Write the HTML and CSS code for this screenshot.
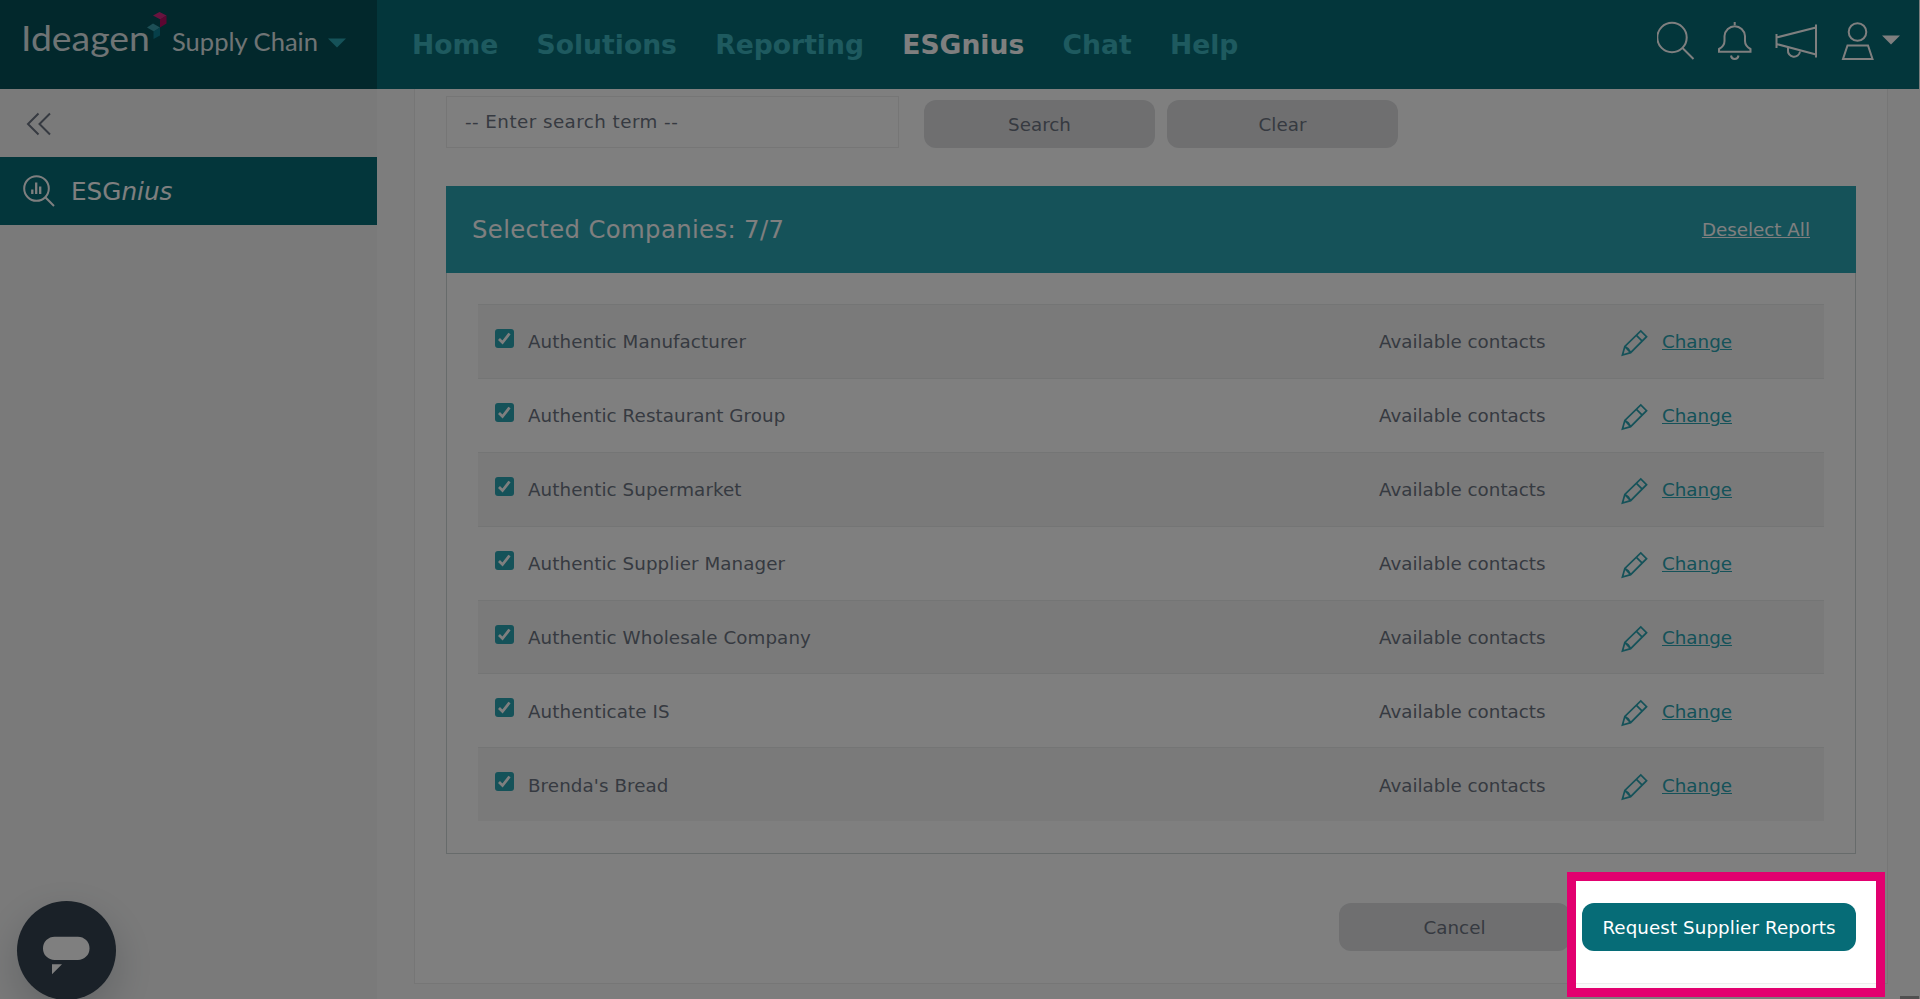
FILE: index.html
```html
<!DOCTYPE html>
<html lang="en">
<head>
  <meta charset="UTF-8" />
  <meta name="viewport" content="width=device-width, initial-scale=1.0" />
  <title>ESGnius - Ideagen Supply Chain</title>
  <link rel="stylesheet" href="styles.css">
</head>
<body>
  <svg class="sprite" width="0" height="0">
    <symbol id="pencil" viewBox="0 0 28 28">
      <path d="M1.5 26.5 L4 17.500 L20.500 1.500 L26.500 7.500 L10 24 Z M16 6 L22 12 M4 17.500 L10 24 M4 17.500 L7.500 20 L10 24" />
    </symbol>
  </svg>

  <header>
    <div class="brand">
      <svg width="377" height="89" viewBox="0 0 377 89">
        <text class="brand-name" x="21" y="51" textLength="129" lengthAdjust="spacingAndGlyphs">Ideagen</text>
        <path fill="#d0277f" d="M153 15.500 L159.500 12 L166.500 15.500 L160.500 19.500 Z" />
        <path fill="#b80d62" d="M166.500 15.500 V23.500 L160 27.500 V19.500 Z" />
        <path fill="#3a9fac" d="M147 27.500 L153 23.500 L160 27.500 L154 31.500 Z" />
        <path fill="#0d7f92" d="M160 27.500 V35.500 L153.500 39 V31.500 Z" />
        <text class="brand-product" x="172" y="51" textLength="146" lengthAdjust="spacingAndGlyphs">Supply Chain</text>
        <path fill="#2aa4b2" d="M328 38.500 H346 L337 47.500 Z" />
      </svg>
    </div>
    <nav>
      <a>Home</a>
      <a>Solutions</a>
      <a>Reporting</a>
      <a class="active">ESGnius</a>
      <a>Chat</a>
      <a>Help</a>
    </nav>
    <svg class="tools" width="262" height="89" viewBox="1657 0 262 89">
      <circle cx="1672" cy="37.500" r="14.700" />
      <path d="M1682.500 48 L1693.500 59" />
      <path d="M1719 51.800 V49 Q1724.500 46 1724.500 41 V36 A10.300 10.800 0 0 1 1745 36 V41 Q1745 46 1750.500 49 V51.800 Z M1734.700 25 V22" />
      <path d="M1731 55.500 Q1731.500 59 1734.700 59 Q1738 59 1738.500 55.500" />
      <path d="M1776.500 34 V48 M1776.500 37.500 L1816 27.500 M1776.500 44 L1816 54.500 M1816 24.500 V57.500" />
      <path d="M1788 48 V50 A6 6 0 0 0 1800 51.500" />
      <circle cx="1857.500" cy="32" r="8.800" />
      <path d="M1847.500 45.500 H1868 L1872.500 59 H1843 Z" />
      <path class="caret" d="M1882 35.500 H1900 L1891 44.500 Z" />
    </svg>
  </header>

  <div class="layout">
    <aside>
      <div class="collapse">
        <svg width="26" height="24" viewBox="0 0 26 24"><path d="M12.500 1.500 L2 12 L12.500 22.500 M24 1.500 L13.500 12 L24 22.500" /></svg>
      </div>
      <a class="side-link">
        <svg width="32" height="32" viewBox="0 0 32 32">
          <circle cx="13.500" cy="13.500" r="12.300" />
          <path d="M22.300 22.300 L31 31" />
          <path class="bars" d="M9.300 19 V14.500 M13.200 19 V7.500 M17.200 19 V11.500" />
        </svg>
        <span>ESG<i>nius</i></span>
      </a>
    </aside>

    <main>
      <section class="panel">
        <div class="search-row">
          <input type="text" placeholder="-- Enter search term --" />
          <button>Search</button>
          <button>Clear</button>
        </div>

        <div class="companies">
          <div class="companies-head">
            <h2>Selected Companies: 7/7</h2>
            <a>Deselect All</a>
          </div>
          <ul>
            <li>
              <svg class="check" viewBox="0 0 19 19"><path d="M4 10 L7.500 13.500 L14.500 4.500" /></svg>
              <span class="name">Authentic Manufacturer</span>
              <span class="contacts">Available contacts</span>
              <svg class="pencil"><use href="#pencil" /></svg>
              <a>Change</a>
            </li>
            <li>
              <svg class="check" viewBox="0 0 19 19"><path d="M4 10 L7.500 13.500 L14.500 4.500" /></svg>
              <span class="name">Authentic Restaurant Group</span>
              <span class="contacts">Available contacts</span>
              <svg class="pencil"><use href="#pencil" /></svg>
              <a>Change</a>
            </li>
            <li>
              <svg class="check" viewBox="0 0 19 19"><path d="M4 10 L7.500 13.500 L14.500 4.500" /></svg>
              <span class="name">Authentic Supermarket</span>
              <span class="contacts">Available contacts</span>
              <svg class="pencil"><use href="#pencil" /></svg>
              <a>Change</a>
            </li>
            <li>
              <svg class="check" viewBox="0 0 19 19"><path d="M4 10 L7.500 13.500 L14.500 4.500" /></svg>
              <span class="name">Authentic Supplier Manager</span>
              <span class="contacts">Available contacts</span>
              <svg class="pencil"><use href="#pencil" /></svg>
              <a>Change</a>
            </li>
            <li>
              <svg class="check" viewBox="0 0 19 19"><path d="M4 10 L7.500 13.500 L14.500 4.500" /></svg>
              <span class="name">Authentic Wholesale Company</span>
              <span class="contacts">Available contacts</span>
              <svg class="pencil"><use href="#pencil" /></svg>
              <a>Change</a>
            </li>
            <li>
              <svg class="check" viewBox="0 0 19 19"><path d="M4 10 L7.500 13.500 L14.500 4.500" /></svg>
              <span class="name">Authenticate IS</span>
              <span class="contacts">Available contacts</span>
              <svg class="pencil"><use href="#pencil" /></svg>
              <a>Change</a>
            </li>
            <li>
              <svg class="check" viewBox="0 0 19 19"><path d="M4 10 L7.500 13.500 L14.500 4.500" /></svg>
              <span class="name">Brenda's Bread</span>
              <span class="contacts">Available contacts</span>
              <svg class="pencil"><use href="#pencil" /></svg>
              <a>Change</a>
            </li>
          </ul>
        </div>

        <div class="actions">
          <button>Cancel</button>
          <button class="primary">Request Supplier Reports</button>
        </div>
      </section>
    </main>
  </div>

  <div class="chat">
    <svg width="99" height="99" viewBox="0 0 99 99">
      <rect x="26" y="35.700" width="46.500" height="23.300" rx="11.600" />
      <path d="M35 63.300 H45 L35 73.300 Z" />
    </svg>
  </div>
  <div class="corner"></div>
  <div class="spotlight"></div>
</body>
</html>
```

FILE: styles.css
```css
* { margin: 0; padding: 0; box-sizing: border-box; }
body {
  position: relative;
  height: 999px;
  overflow: hidden;
  font-family: 'DejaVu Sans', Verdana, sans-serif;
  font-size: 18.3px;
  color: #6d7482;
  background: #fafafa;
}
.sprite { position: absolute; }
svg { display: block; flex-shrink: 0; }

header {
  display: flex;
  align-items: center;
  width: 1919px;
  height: 89px;
  background: #066c77;
}
.brand {
  width: 377px;
  height: 89px;
  background: #045058;
}
.brand text {
  font-family: Lato, sans-serif;
  fill: #fff;
  fill-opacity: .88;
}
.brand .brand-name { font-size: 35px; }
.brand .brand-product { font-size: 25px; }
nav {
  display: flex;
  flex: 1;
  gap: 38.3px;
  padding-left: 35px;
  font-size: 26.6px;
  font-weight: bold;
  color: #3db4bf;
}
nav .active { color: #fff; }
.tools {
  fill: none;
  stroke: #fff;
  stroke-width: 2;
}
.tools .caret {
  fill: #fff;
  stroke: none;
}

.layout {
  display: flex;
  height: 910px;
}
aside {
  width: 377px;
  background: #f5f5f5;
}
.collapse {
  display: flex;
  align-items: center;
  height: 68px;
  padding: 1px 0 0 26px;
}
.collapse svg {
  fill: none;
  stroke: #6d7482;
  stroke-width: 2;
}
.side-link {
  display: flex;
  align-items: center;
  height: 68px;
  padding-left: 23px;
  gap: 16px;
  font-size: 24.7px;
  color: #fff;
  background: #066c77;
}
.side-link svg {
  fill: none;
  stroke: #fff;
  stroke-width: 2;
}
.side-link .bars { stroke-width: 2.3; }

main {
  flex: 1;
  padding: 0 32px 0 37px;
}
.panel {
  height: 895px;
  padding: 7px 31px 0;
  background: #fff;
  border: 1.5px solid #ededed;
  border-top: none;
}
.search-row {
  display: flex;
  align-items: flex-end;
}
input {
  width: 453px;
  height: 52px;
  padding: 0 0 1px 18px;
  font: inherit;
  letter-spacing: .45px;
  border: 1.5px solid #ededed;
}
input::placeholder { color: #6d7482; }
button {
  width: 231px;
  height: 48px;
  margin-left: 12px;
  font: inherit;
  color: #6d7482;
  background: #dedfe1;
  border: none;
  border-radius: 12px;
}
input + button { margin-left: 25px; }

.companies {
  height: 668px;
  margin-top: 38px;
  border: 1.5px solid #cfd6d6;
  border-top: none;
}
.companies-head {
  display: flex;
  align-items: center;
  justify-content: space-between;
  height: 87px;
  margin: 0 -1px;
  padding: 0 46px 0 26px;
  color: #fff;
  background: #2aa4b2;
}
.companies-head h2 {
  font-size: 24.3px;
  font-weight: normal;
  letter-spacing: .38px;
}
a { text-decoration: none; }
.companies-head a, li a { text-decoration: underline; }
ul {
  margin: 31px 31px 0;
  list-style: none;
}
li {
  display: grid;
  grid-template-columns: 33px 851px 242px 41px 1fr;
  align-items: center;
  height: 73.9px;
  padding: 1px 0 0 17px;
  border-top: 1.5px solid #e9ebeb;
}
li:nth-child(odd) { background: #f5f5f5; }
li a { color: #2aa4b2; }
.name { letter-spacing: .08px; }
.check {
  width: 19px;
  height: 19px;
  margin-bottom: 7px;
  border-radius: 3px;
  background: #2aa4b2;
  fill: none;
  stroke: #fff;
  stroke-width: 2.8;
}
.pencil {
  width: 27px;
  height: 28px;
  margin-top: 3px;
  fill: none;
  stroke: #2aa4b2;
  stroke-width: 1.8;
}

.actions {
  display: flex;
  justify-content: flex-end;
  margin-top: 49px;
}
.actions .primary {
  width: 274px;
  letter-spacing: .08px;
  color: #fff;
  background: #066c77;
}

.chat {
  position: absolute;
  left: 17px;
  top: 901px;
  width: 99px;
  height: 99px;
  border-radius: 50%;
  background: #344250;
  box-shadow: 0 15px 40px rgba(52, 66, 80, .25);
}
.chat svg { fill: #fff; }
.corner {
  position: absolute;
  left: 1900px;
  top: 996px;
  width: 19px;
  height: 3px;
  background: #a0a0a0;
}

/* dims everything outside the highlighted button */
.spotlight {
  position: absolute;
  left: 1566.5px;
  top: 872px;
  width: 318px;
  height: 125px;
  border: 9.5px solid #e2006f;
  box-shadow: 0 0 0 2000px rgba(0, 0, 0, .5);
}
```
